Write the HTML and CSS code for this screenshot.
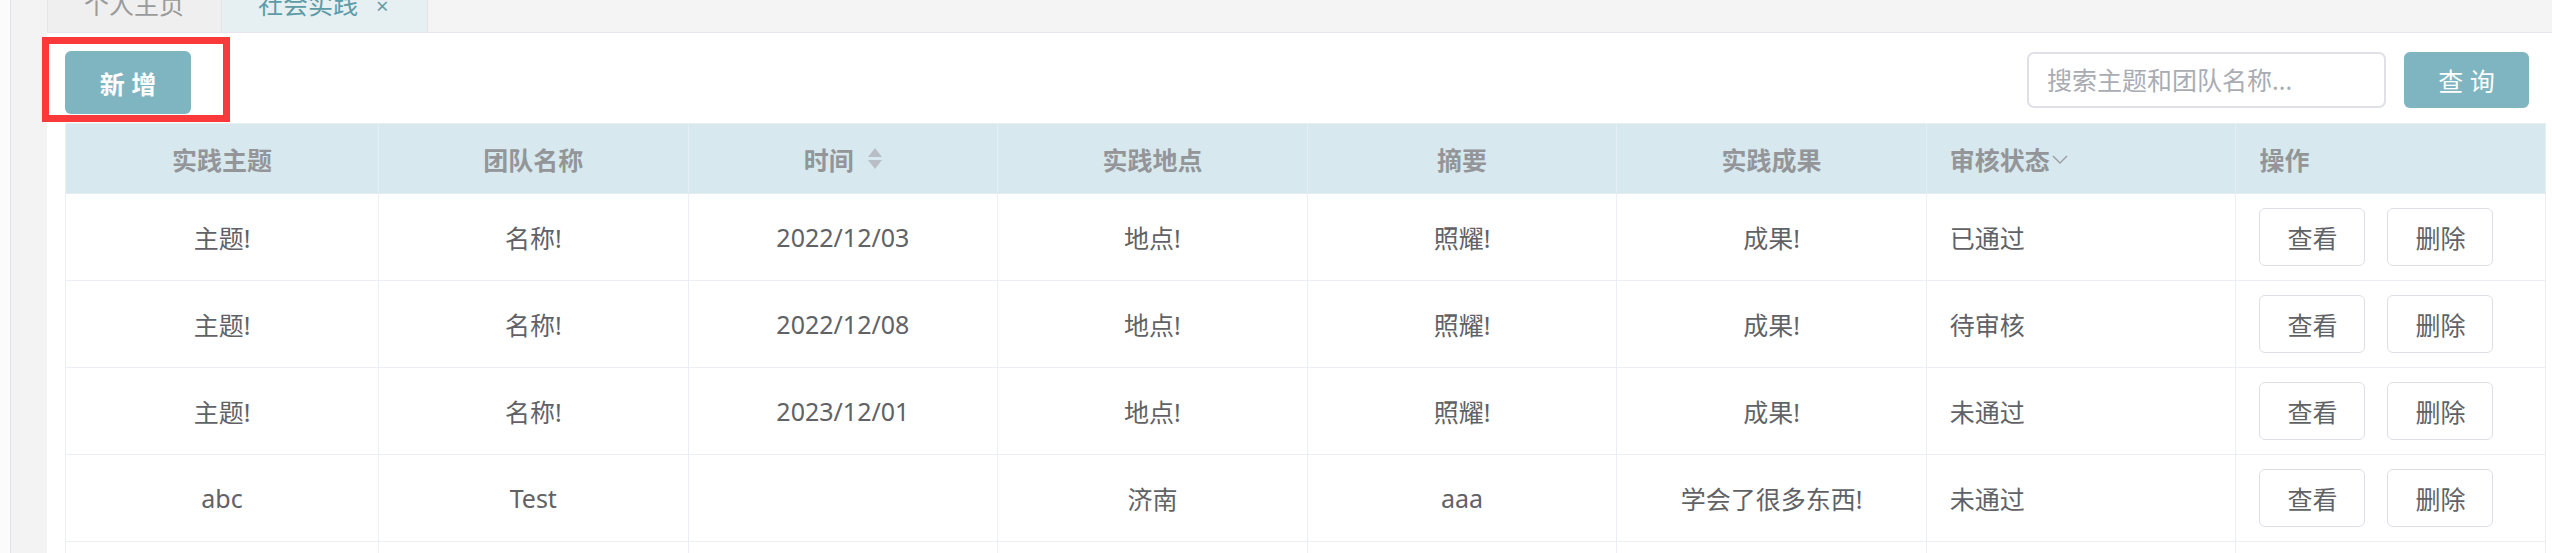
FILE: index.html
```html
<!DOCTYPE html>
<html lang="zh-CN">
<head>
<meta charset="utf-8">
<title>社会实践</title>
<link rel="stylesheet" href="styles.css">
</head>
<body>
<div class="app">
  <div class="gutter"></div>
  <div class="side"></div>
  <div class="main">
    <div class="tabbar">
      <div class="tab">个人主页</div>
      <div class="tab active">社会实践<span class="close">×</span></div>
    </div>
    <div class="content">
      <div class="toolbar">
        <button class="btn-primary btn-add">新 增</button>
        <div class="search">
          <input class="search-input" type="text" placeholder="搜索主题和团队名称...">
          <button class="btn-primary btn-query">查 询</button>
        </div>
      </div>
      <div class="table">
        <div class="row head">
          <div class="cell center">实践主题</div>
          <div class="cell center">团队名称</div>
          <div class="cell center">时间<span class="caret"><i class="up"></i><i class="down"></i></span></div>
          <div class="cell center">实践地点</div>
          <div class="cell center">摘要</div>
          <div class="cell center">实践成果</div>
          <div class="cell left">审核状态<svg class="chev" width="18" height="12" viewBox="0 0 18 12"><path d="M2 3 L9 10 L16 3" fill="none" stroke="#9a9ca3" stroke-width="1.4"/></svg></div>
          <div class="cell left">操作</div>
        </div>
        <div class="row">
          <div class="cell center">主题!</div>
          <div class="cell center">名称!</div>
          <div class="cell center">2022/12/03</div>
          <div class="cell center">地点!</div>
          <div class="cell center">照耀!</div>
          <div class="cell center">成果!</div>
          <div class="cell left">已通过</div>
          <div class="cell left ops"><button class="btn">查看</button><button class="btn">删除</button></div>
        </div>
        <div class="row">
          <div class="cell center">主题!</div>
          <div class="cell center">名称!</div>
          <div class="cell center">2022/12/08</div>
          <div class="cell center">地点!</div>
          <div class="cell center">照耀!</div>
          <div class="cell center">成果!</div>
          <div class="cell left">待审核</div>
          <div class="cell left ops"><button class="btn">查看</button><button class="btn">删除</button></div>
        </div>
        <div class="row">
          <div class="cell center">主题!</div>
          <div class="cell center">名称!</div>
          <div class="cell center">2023/12/01</div>
          <div class="cell center">地点!</div>
          <div class="cell center">照耀!</div>
          <div class="cell center">成果!</div>
          <div class="cell left">未通过</div>
          <div class="cell left ops"><button class="btn">查看</button><button class="btn">删除</button></div>
        </div>
        <div class="row">
          <div class="cell center">abc</div>
          <div class="cell center">Test</div>
          <div class="cell center"></div>
          <div class="cell center">济南</div>
          <div class="cell center">aaa</div>
          <div class="cell center">学会了很多东西!</div>
          <div class="cell left">未通过</div>
          <div class="cell left ops"><button class="btn">查看</button><button class="btn">删除</button></div>
        </div>
        <div class="row">
          <div class="cell center"></div>
          <div class="cell center"></div>
          <div class="cell center"></div>
          <div class="cell center"></div>
          <div class="cell center"></div>
          <div class="cell center"></div>
          <div class="cell left"></div>
          <div class="cell left"></div>
        </div>
      </div>
    </div>
  </div>
</div>
<div class="highlight"></div>
</body>
</html>
```
FILE: styles.css
```css
html, body {
  margin: 0;
  padding: 0;
  height: 553px;
  overflow: hidden;
  background: #ffffff;
}
body {
  font-family: "Noto Sans", "Noto Sans CJK SC", sans-serif;
  font-size: 25px;
  color: #606266;
  position: relative;
}
.app {
  display: flex;
  height: 553px;
}
.gutter {
  width: 10px;
  flex: none;
  background: #fbfbfb;
}
.side {
  width: 36px;
  flex: none;
  background: #f3f3f3;
  border-left: 1px solid #e2e4ea;
}
.main {
  flex: 1;
  min-width: 0;
  display: flex;
  flex-direction: column;
}
.tabbar {
  height: 32px;
  flex: none;
  display: flex;
  align-items: flex-start;
  overflow: hidden;
  background: #f4f4f4;
  border-bottom: 1px solid #e4e6ec;
}
.tab {
  height: 50px;
  margin-top: -16px;
  line-height: 40px;
  padding: 0 37px 0 36px;
  background: #efefef;
  color: #9a9a9a;
  border-left: 1px solid #e6e6e6;
  border-right: 1px solid #e4e4e4;
  white-space: nowrap;
}
.tab.active {
  background: #e6eff2;
  color: #5d9ba6;
  border-left: none;
  padding: 0 38px 0 36px;
}
.close {
  font-size: 22px;
  margin-left: 18px;
  color: #6a9ca6;
}
.content {
  flex: 1;
  padding: 18px 6px 0 18px;
  overflow: hidden;
}
.toolbar {
  display: flex;
  justify-content: space-between;
  align-items: flex-start;
  padding-right: 17px;
}
.btn-primary {
  font-family: inherit;
  font-size: 25px;
  color: #ffffff;
  background: #7fb5c0;
  border: none;
  border-radius: 6px;
  padding: 0;
  cursor: pointer;
}
.btn-add {
  width: 126px;
  height: 63px;
  font-weight: bold;
}
.search {
  display: flex;
  gap: 18px;
  margin-top: 1px;
}
.search-input {
  width: 359px;
  height: 56px;
  box-sizing: border-box;
  border: 2px solid #dfe1e6;
  border-radius: 7px;
  padding: 0 18px;
  font-family: inherit;
  font-size: 25px;
  color: #606266;
  outline: none;
}
.search-input::placeholder {
  color: #a9acb3;
}
.btn-query {
  width: 125px;
  height: 56px;
}
.table {
  margin-top: 9px;
  border-top: 1px solid #e7eef2;
  border-left: 1px solid #ebeef5;
}
.row {
  display: grid;
  grid-template-columns: 313px repeat(7, 1fr);
  height: 87px;
  box-sizing: border-box;
  border-bottom: 1px solid #ebeef5;
}
.row.head {
  height: 70px;
  background: #d7e9ee;
  border-bottom: 1px solid #e4eef2;
}
.cell {
  display: flex;
  align-items: center;
  border-right: 1px solid #ebeef5;
  white-space: nowrap;
  overflow: hidden;
}
.head .cell {
  font-weight: bold;
  color: #939599;
  border-right: 1px solid #e3eff2;
}
.cell.center {
  justify-content: center;
}
.cell.left {
  justify-content: flex-start;
  padding-left: 23px;
}
.caret {
  display: inline-flex;
  flex-direction: column;
  align-items: center;
  gap: 3px;
  margin-left: 14px;
}
.caret i {
  display: block;
  width: 0;
  height: 0;
  border-left: 7px solid transparent;
  border-right: 7px solid transparent;
}
.caret .up {
  border-bottom: 9px solid #b9bdc5;
}
.caret .down {
  border-top: 9px solid #b9bdc5;
}
.chev {
  margin-left: 1px;
}
.ops {
  gap: 22px;
}
.btn {
  width: 106px;
  height: 58px;
  box-sizing: border-box;
  background: #ffffff;
  border: 1px solid #dcdfe6;
  border-radius: 6px;
  font-family: inherit;
  font-size: 25px;
  color: #606266;
  padding: 0;
  cursor: pointer;
}
.highlight {
  position: absolute;
  left: 42px;
  top: 37px;
  width: 188px;
  height: 85px;
  box-sizing: border-box;
  border: 7px solid #fa3a3a;
  pointer-events: none;
}
```
